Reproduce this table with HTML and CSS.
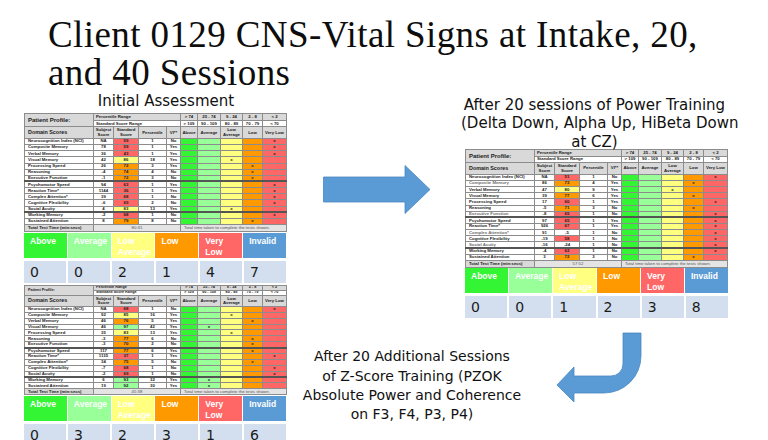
FILE: index.html
```html
<!DOCTYPE html>
<html lang="en">
<head>
<meta charset="utf-8">
<title>Client 0129 CNS-Vital Signs</title>
<link rel="stylesheet" href="styles.css">
</head>
<body>
<div class="slide">
  <h1 class="title">Client 0129 CNS-Vital Signs at Intake, 20,<br>and 40 Sessions</h1>
  <div class="content">
    <div class="col-left">
      <h2 class="head-left">Initial Assessment</h2>

      <table class="cns big">
        <colgroup><col class="cw-n"><col class="cw-s"><col class="cw-st"><col class="cw-p"><col class="cw-vi"><col class="cw-a ca"><col class="cw-v cv"><col class="cw-la cla"><col class="cw-lo clo"><col class="cw-vl cvl"></colgroup>
        <tr class="r1"><td class="hd pp" rowspan="2">Patient Profile:</td><td class="hd lt" colspan="4">Percentile Range</td><td class="hd">&gt; 74</td><td class="hd">25 - 74</td><td class="hd">9 - 24</td><td class="hd">2 - 8</td><td class="hd">&lt; 2</td></tr>
        <tr class="r2"><td class="wh lt" colspan="4">Standard Score Range</td><td class="wh">&gt; 109</td><td class="wh">90 - 109</td><td class="wh">80 - 89</td><td class="wh">70 - 79</td><td class="wh">&lt; 70</td></tr>
        <tr class="r3"><td class="hd ds">Domain Scores</td><td class="hd">Subject<br>Score</td><td class="hd">Standard<br>Score</td><td class="hd">Percentile</td><td class="hd">VI**</td><td class="hd">Above</td><td class="hd">Average</td><td class="hd">Low<br>Average</td><td class="hd">Low</td><td class="hd">Very Low</td></tr>
        <tr><td class="n">Neurocognition Index (NCI)</td><td>NA</td><td class="r">59</td><td>1</td><td>No</td><td></td><td></td><td></td><td></td><td>x</td></tr>
        <tr><td class="n">Composite Memory</td><td>78</td><td class="r">59</td><td>1</td><td>Yes</td><td></td><td></td><td></td><td></td><td>x</td></tr>
        <tr><td class="n">Verbal Memory</td><td>36</td><td class="r">43</td><td>1</td><td>Yes</td><td></td><td></td><td></td><td></td><td>x</td></tr>
        <tr><td class="n">Visual Memory</td><td>42</td><td class="y">86</td><td>18</td><td>Yes</td><td></td><td></td><td>x</td><td></td><td></td></tr>
        <tr><td class="n">Processing Speed</td><td>26</td><td class="o">72</td><td>3</td><td>Yes</td><td></td><td></td><td></td><td>x</td><td></td></tr>
        <tr><td class="n">Reasoning</td><td>-4</td><td class="o">74</td><td>4</td><td>No</td><td></td><td></td><td></td><td>x</td><td></td></tr>
        <tr class="sep"><td class="n">Executive Function</td><td>-1</td><td class="o">72</td><td>3</td><td>No</td><td></td><td></td><td></td><td>x</td><td></td></tr>
        <tr><td class="n">Psychomotor Speed</td><td>94</td><td class="r">63</td><td>1</td><td>Yes</td><td></td><td></td><td></td><td></td><td>x</td></tr>
        <tr><td class="n">Reaction Time*</td><td>1144</td><td class="r">36</td><td>1</td><td>Yes</td><td></td><td></td><td></td><td></td><td>x</td></tr>
        <tr><td class="n">Complex Attention*</td><td>39</td><td class="r">68</td><td>1</td><td>No</td><td></td><td></td><td></td><td></td><td>x</td></tr>
        <tr><td class="n">Cognitive Flexibility</td><td>-6</td><td class="r">69</td><td>2</td><td>No</td><td></td><td></td><td></td><td></td><td>x</td></tr>
        <tr class="sep"><td class="n">Social Acuity</td><td>4</td><td class="y">83</td><td>13</td><td>Yes</td><td></td><td></td><td>x</td><td></td><td></td></tr>
        <tr><td class="n">Working Memory</td><td>-2</td><td class="r">68</td><td>1</td><td>No</td><td></td><td></td><td></td><td></td><td>x</td></tr>
        <tr><td class="n">Sustained Attention</td><td>8</td><td class="o">79</td><td>8</td><td>No</td><td></td><td></td><td></td><td>x</td><td></td></tr>
        <tr class="tot"><td class="hd n">Total Test Time (min:secs)</td><td class="tt" colspan="4">80:31</td><td class="tn" colspan="5">Total time taken to complete the tests shown.</td></tr>
      </table>
      <div class="legend">
        <div class="lg ga">Above</div><div class="lg gv">Average</div><div class="lg gla">Low Average</div><div class="lg glo">Low</div><div class="lg gvl">Very Low</div><div class="lg gin">Invalid</div>
      </div>
      <div class="counts">
        <div>0</div><div>0</div><div>2</div><div>1</div><div>4</div><div>7</div>
      </div>

      <table class="cns small">
        <colgroup><col class="cw-n"><col class="cw-s"><col class="cw-st"><col class="cw-p"><col class="cw-vi"><col class="cw-a ca"><col class="cw-v cv"><col class="cw-la cla"><col class="cw-lo clo"><col class="cw-vl cvl"></colgroup>
        <tr class="r1"><td class="hd pp" rowspan="2">Patient Profile:</td><td class="hd lt" colspan="4">Percentile Range</td><td class="hd">&gt; 74</td><td class="hd">25 - 74</td><td class="hd">9 - 24</td><td class="hd">2 - 8</td><td class="hd">&lt; 2</td></tr>
        <tr class="r2"><td class="wh lt" colspan="4">Standard Score Range</td><td class="wh">&gt; 109</td><td class="wh">90 - 109</td><td class="wh">80 - 89</td><td class="wh">70 - 79</td><td class="wh">&lt; 70</td></tr>
        <tr class="r3"><td class="hd ds">Domain Scores</td><td class="hd">Subject<br>Score</td><td class="hd">Standard<br>Score</td><td class="hd">Percentile</td><td class="hd">VI**</td><td class="hd">Above</td><td class="hd">Average</td><td class="hd">Low<br>Average</td><td class="hd">Low</td><td class="hd">Very Low</td></tr>
        <tr><td class="n">Neurocognition Index (NCI)</td><td>NA</td><td class="r">68</td><td>1</td><td>No</td><td></td><td></td><td></td><td></td><td>x</td></tr>
        <tr><td class="n">Composite Memory</td><td>92</td><td class="y">85</td><td>16</td><td>Yes</td><td></td><td></td><td>x</td><td></td><td></td></tr>
        <tr><td class="n">Verbal Memory</td><td>46</td><td class="o">76</td><td>5</td><td>Yes</td><td></td><td></td><td></td><td>x</td><td></td></tr>
        <tr><td class="n">Visual Memory</td><td>46</td><td class="g">97</td><td>42</td><td>Yes</td><td></td><td>x</td><td></td><td></td><td></td></tr>
        <tr><td class="n">Processing Speed</td><td>35</td><td class="y">83</td><td>13</td><td>Yes</td><td></td><td></td><td>x</td><td></td><td></td></tr>
        <tr><td class="n">Reasoning</td><td>-3</td><td class="o">77</td><td>6</td><td>No</td><td></td><td></td><td></td><td>x</td><td></td></tr>
        <tr class="sep"><td class="n">Executive Function</td><td>-3</td><td class="o">70</td><td>2</td><td>No</td><td></td><td></td><td></td><td>x</td><td></td></tr>
        <tr><td class="n">Psychomotor Speed</td><td>117</td><td class="o">77</td><td>6</td><td>Yes</td><td></td><td></td><td></td><td>x</td><td></td></tr>
        <tr><td class="n">Reaction Time*</td><td>1135</td><td class="r">37</td><td>1</td><td>Yes</td><td></td><td></td><td></td><td></td><td>x</td></tr>
        <tr><td class="n">Complex Attention*</td><td>34</td><td class="o">75</td><td>5</td><td>No</td><td></td><td></td><td></td><td>x</td><td></td></tr>
        <tr><td class="n">Cognitive Flexibility</td><td>-7</td><td class="r">68</td><td>1</td><td>No</td><td></td><td></td><td></td><td></td><td>x</td></tr>
        <tr class="sep"><td class="n">Social Acuity</td><td>-2</td><td class="r">69</td><td>1</td><td>No</td><td></td><td></td><td></td><td></td><td>x</td></tr>
        <tr><td class="n">Working Memory</td><td>6</td><td class="g">93</td><td>32</td><td>Yes</td><td></td><td>x</td><td></td><td></td><td></td></tr>
        <tr><td class="n">Sustained Attention</td><td>19</td><td class="g">92</td><td>30</td><td>Yes</td><td></td><td>x</td><td></td><td></td><td></td></tr>
        <tr class="tot"><td class="hd n">Total Test Time (min:secs)</td><td class="tt" colspan="4">45:38</td><td class="tn" colspan="5">Total time taken to complete the tests shown.</td></tr>
      </table>
      <div class="legend">
        <div class="lg ga">Above</div><div class="lg gv">Average</div><div class="lg gla">Low Average</div><div class="lg glo">Low</div><div class="lg gvl">Very Low</div><div class="lg gin">Invalid</div>
      </div>
      <div class="counts">
        <div>0</div><div>3</div><div>2</div><div>3</div><div>1</div><div>6</div>
      </div>
    </div>

    <div class="col-right">
      <div class="top-row">
        <div class="mid">
          <svg class="arrow-right" width="108" height="49" viewBox="0 0 108 49"><polygon points="0.5,12 82,12 82,0.5 107,24.5 82,48.5 82,37 0.5,37" fill="#5b9bd5" stroke="#4a86c2" stroke-width="0.8"/></svg>
        </div>
        <div class="right-report">
          <h2 class="head-right">After 20 sessions of Power Training<br>(Delta Down, Alpha Up, HiBeta Down<br>at CZ)</h2>
          <table class="cns big">
            <colgroup><col class="cw-n"><col class="cw-s"><col class="cw-st"><col class="cw-p"><col class="cw-vi"><col class="cw-a ca"><col class="cw-v cv"><col class="cw-la cla"><col class="cw-lo clo"><col class="cw-vl cvl"></colgroup>
            <tr class="r1"><td class="hd pp" rowspan="2">Patient Profile:</td><td class="hd lt" colspan="4">Percentile Range</td><td class="hd">&gt; 74</td><td class="hd">25 - 74</td><td class="hd">9 - 24</td><td class="hd">2 - 8</td><td class="hd">&lt; 2</td></tr>
            <tr class="r2"><td class="wh lt" colspan="4">Standard Score Range</td><td class="wh">&gt; 109</td><td class="wh">90 - 109</td><td class="wh">80 - 89</td><td class="wh">70 - 79</td><td class="wh">&lt; 70</td></tr>
            <tr class="r3"><td class="hd ds">Domain Scores</td><td class="hd">Subject<br>Score</td><td class="hd">Standard<br>Score</td><td class="hd">Percentile</td><td class="hd">VI**</td><td class="hd">Above</td><td class="hd">Average</td><td class="hd">Low<br>Average</td><td class="hd">Low</td><td class="hd">Very Low</td></tr>
            <tr><td class="n">Neurocognition Index (NCI)</td><td>NA</td><td class="r">51</td><td>1</td><td>No</td><td></td><td></td><td></td><td></td><td>x</td></tr>
            <tr><td class="n dim">Composite Memory</td><td>86</td><td class="o">73</td><td>4</td><td>Yes</td><td></td><td></td><td></td><td>x</td><td></td></tr>
            <tr><td class="n">Verbal Memory</td><td>47</td><td class="y">80</td><td>9</td><td>Yes</td><td></td><td></td><td>x</td><td></td><td></td></tr>
            <tr><td class="n">Visual Memory</td><td>39</td><td class="o">77</td><td>6</td><td>Yes</td><td></td><td></td><td></td><td>x</td><td></td></tr>
            <tr><td class="n">Processing Speed</td><td>17</td><td class="r">60</td><td>1</td><td>Yes</td><td></td><td></td><td></td><td></td><td>x</td></tr>
            <tr><td class="n">Reasoning</td><td>-5</td><td class="o">71</td><td>3</td><td>No</td><td></td><td></td><td></td><td>x</td><td></td></tr>
            <tr class="sep"><td class="n dim">Executive Function</td><td>-8</td><td class="r">65</td><td>1</td><td>No</td><td></td><td></td><td></td><td></td><td>x</td></tr>
            <tr><td class="n">Psychomotor Speed</td><td>97</td><td class="r">65</td><td>1</td><td>Yes</td><td></td><td></td><td></td><td></td><td>x</td></tr>
            <tr><td class="n">Reaction Time*</td><td>926</td><td class="r">67</td><td>1</td><td>Yes</td><td></td><td></td><td></td><td></td><td>x</td></tr>
            <tr><td class="n dim">Complex Attention*</td><td>91</td><td>-5</td><td>1</td><td>No</td><td></td><td></td><td></td><td></td><td>x</td></tr>
            <tr><td class="n">Cognitive Flexibility</td><td>-19</td><td class="r">58</td><td>1</td><td>No</td><td></td><td></td><td></td><td></td><td>x</td></tr>
            <tr class="sep"><td class="n dim">Social Acuity</td><td>-16</td><td>-24</td><td>1</td><td>No</td><td></td><td></td><td></td><td></td><td>x</td></tr>
            <tr><td class="n">Working Memory</td><td>-4</td><td class="r">62</td><td>1</td><td>No</td><td></td><td></td><td></td><td></td><td>x</td></tr>
            <tr><td class="n">Sustained Attention</td><td>3</td><td class="o">72</td><td>3</td><td>No</td><td></td><td></td><td></td><td>x</td><td></td></tr>
            <tr class="tot"><td class="hd n">Total Test Time (min:secs)</td><td class="tt" colspan="4">57:52</td><td class="tn" colspan="5">Total time taken to complete the tests shown.</td></tr>
          </table>
          <div class="legend">
            <div class="lg ga">Above</div><div class="lg gv">Average</div><div class="lg gla">Low Average</div><div class="lg glo">Low</div><div class="lg gvl">Very Low</div><div class="lg gin">Invalid</div>
          </div>
          <div class="counts">
            <div>0</div><div>0</div><div>1</div><div>2</div><div>3</div><div>8</div>
          </div>
        </div>
      </div>
      <div class="bottom-row">
        <p class="caption">After 20 Additional Sessions<br>of Z-Score Training (PZOK<br>Absolute Power and Coherence<br>on F3, F4, P3, P4)</p>
        <svg class="arrow-bent" width="86" height="71" viewBox="0 0 86 71"><path d="M67,1 H85 V24 A37,37 0 0 1 48,61 H18 V70 L1,53 L18,35 V44 H55 A12,12 0 0 0 67,32 Z" fill="#5b9bd5" stroke="#4a86c2" stroke-width="0.8"/></svg>
      </div>
    </div>
  </div>
</div>
</body>
</html>
```

FILE: styles.css
```css
* { box-sizing: border-box; }

body {
  margin: 0;
  width: 768px;
  height: 440px;
  overflow: hidden;
  background: #ffffff;
  color: #111111;
  font-family: "DejaVu Sans", "Noto Sans", sans-serif;
}

.slide {
  padding-left: 24px;
}

.title {
  margin: 0;
  padding: 15.5px 0 0 24px;
  height: 91.5px;
  font-family: "Liberation Serif", "DejaVu Serif", serif;
  font-weight: normal;
  font-size: 37px;
  line-height: 38px;
  letter-spacing: 0.4px;
  color: #0d0d0d;
}

.content {
  display: flex;
}

.col-left {
  width: 262px;
  flex: none;
}

.head-left,
.head-right,
.caption {
  margin: 0;
  font-weight: normal;
  font-size: 15px;
  line-height: 18.5px;
  text-align: center;
  white-space: nowrap;
  color: #111111;
}

.head-left {
  height: 21.8px;
  padding: 0.8px 0 0 22px;
}

/* ---------- CNS Vital Signs table ---------- */
.cns {
  border-collapse: collapse;
  table-layout: fixed;
  width: 262px;
  font-family: "Liberation Sans", Arial, sans-serif;
  font-size: 4.3px;
  font-weight: bold;
  line-height: 1;
  color: #1a1a1a;
  border: 1px solid #555555;
}

.cns td {
  padding: 0;
  border: 1px solid #8c8c8c;
  text-align: center;
  vertical-align: middle;
  white-space: nowrap;
  overflow: hidden;
}

.cw-n { width: 69px; }
.cw-s { width: 20px; }
.cw-st { width: 25px; }
.cw-p { width: 28px; }
.cw-vi { width: 14px; }
.cw-a { width: 17px; }
.cw-v { width: 23px; }
.cw-la { width: 22px; }
.cw-lo { width: 20px; }
.cw-vl { width: 24px; }

.ca { background: #33f533; }
.cv { background: #99ff99; }
.cla { background: #ffff80; }
.clo { background: #ff9900; }
.cvl { background: #ff6666; }

.cns .hd { background: #d9d9d9; }
.cns .wh { background: #ffffff; }
.cns .lt { text-align: left; padding-left: 2px; }
.cns .pp { text-align: left; padding-left: 3px; font-size: 6px; }
.cns .ds { text-align: left; padding-left: 3px; font-size: 5.4px; }
.cns .n { text-align: left; padding-left: 3px; background: #ffffff; }
.cns .n.dim { color: #6e6e6e; }
.cns .hd.n { background: #d9d9d9; }

.cns .r { background: #ff6666; }
.cns .o { background: #ff9900; }
.cns .y { background: #ffff80; }
.cns .g { background: #99ff99; }

.cns .sep td { border-bottom: 2px solid #555555; }

.cns .tt {
  background: #e4e4e4;
  font-weight: normal;
  color: #555555;
}
.cns .tn {
  background: #e4e4e4;
  font-weight: normal;
  color: #555555;
  text-align: left;
  padding-left: 3px;
}

.big .r1 { height: 6.6px; }
.big .r2 { height: 6.6px; }
.big .r3 { height: 11.4px; }
.big tr { height: 6.16px; }
.big .tot { height: 7px; }

.small .r1 { height: 5px; }
.small .r2 { height: 4.6px; }
.small .r3 { height: 11px; }
.small tr { height: 5.9px; }
.small .tot { height: 6px; }
.small .r1 td, .small .r2 td { font-size: 3.8px; }
.small .pp { font-size: 5.6px; }

/* ---------- legend & counts ---------- */
.legend {
  display: grid;
  grid-template-columns: repeat(6, 1fr);
  column-gap: 1px;
  height: 25px;
  margin-top: 1px;
}

.lg {
  padding: 3px 3px 0 6px;
  font-family: "Liberation Sans", Arial, sans-serif;
  font-size: 8.5px;
  line-height: 11px;
  font-weight: bold;
  color: #ffffff;
}

.ga { background: #33f533; }
.gv { background: #99ff99; }
.gla { background: #ffff80; }
.glo { background: #ff9900; }
.gvl { background: #ff6666; }
.gin { background: #5b9bd5; }

.counts {
  display: grid;
  grid-template-columns: repeat(6, 1fr);
  column-gap: 2px;
  height: 22px;
  margin-top: 3px;
  margin-bottom: 2px;
}

.counts div {
  background: #d3dfee;
  padding-left: 6px;
  font-size: 14px;
  line-height: 22px;
  color: #1a1a1a;
}

/* ---------- right side ---------- */
.col-right {
  width: 482px;
  flex: none;
}

.top-row {
  display: flex;
}

.mid {
  width: 179px;
  flex: none;
}

.arrow-right {
  display: block;
  margin: 73.5px 0 0 37px;
}

.right-report {
  width: 263px;
  flex: none;
  padding-top: 4px;
}

.head-right {
  height: 53.7px;
  margin-left: -4px;
  margin-right: 0;
}

.right-report .cns { width: 263px; }
.right-report .legend { margin-top: 0.5px; }

.bottom-row {
  display: flex;
  align-items: flex-start;
}

.caption {
  width: 240px;
  margin: 27px 0 0 6px;
  font-size: 14px;
  line-height: 19.2px;
}

.arrow-bent {
  display: block;
  margin: 12px 0 0 24px;
}
```
